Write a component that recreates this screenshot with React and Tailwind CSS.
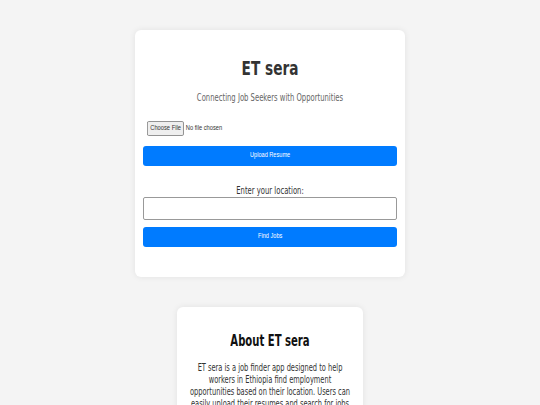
const sans = { fontFamily: '"Liberation Sans", Arial, sans-serif' };

export default function App() {
  return (
    <div className="min-h-screen bg-[#f4f4f4] pt-[30px] pb-10 flex flex-col items-center gap-[30px] text-[#333]" style={{ fontFamily: '"DejaVu Sans Condensed", "DejaVu Sans", sans-serif' }}>
      <div className="w-[270px] bg-white rounded-md shadow-[0_0_6px_rgba(0,0,0,0.08)] px-2 pt-[26px] pb-[30px] flex flex-col">
        <h1 className="text-center text-[20px] font-bold leading-6 scale-x-[0.76]">ET sera</h1>
        <p className="text-center text-[10px] text-[#666] mt-3 leading-3 scale-x-[0.76]">Connecting Job Seekers with Opportunities</p>
        <div className="mt-[17px] ml-1 flex items-center gap-[2px] text-[7px] scale-x-[0.82] origin-left" style={sans}>
          <span className="border border-[#888] bg-[#efefef] rounded-[2px] px-[3px] py-[1px]">Choose File</span>
          <span>No file chosen</span>
        </div>
        <button className="mt-[10px] h-5 w-full rounded-[3px] bg-[#007bff] text-white text-[7px]" style={sans}>
          <span className="inline-block scale-x-[0.8]">Upload Resume</span>
        </button>
        <label className="mt-[19px] text-center text-[10px] leading-3 scale-x-[0.76]">Enter your location:</label>
        <input className="h-[23px] w-full border border-[#999] rounded-[2px] bg-white" />
        <button className="mt-[7px] h-5 w-full rounded-[3px] bg-[#007bff] text-white text-[7px]" style={sans}>
          <span className="inline-block scale-x-[0.8]">Find Jobs</span>
        </button>
      </div>
      <div className="w-[186px] bg-white rounded-md shadow-[0_0_6px_rgba(0,0,0,0.08)] px-3 pt-6 pb-6 flex flex-col">
        <h2 className="text-center text-[16px] font-bold leading-5 text-[#111] scale-x-[0.7]">About ET sera</h2>
        <p className="mt-[11px] -mx-[31px] text-center text-[10px] leading-3 scale-x-[0.74]">
          ET sera is a job finder app designed to help<br />
          workers in Ethiopia find employment<br />
          opportunities based on their location. Users can<br />
          easily upload their resumes and search for jobs<br />
          in their area.
        </p>
      </div>
    </div>
  );
}
